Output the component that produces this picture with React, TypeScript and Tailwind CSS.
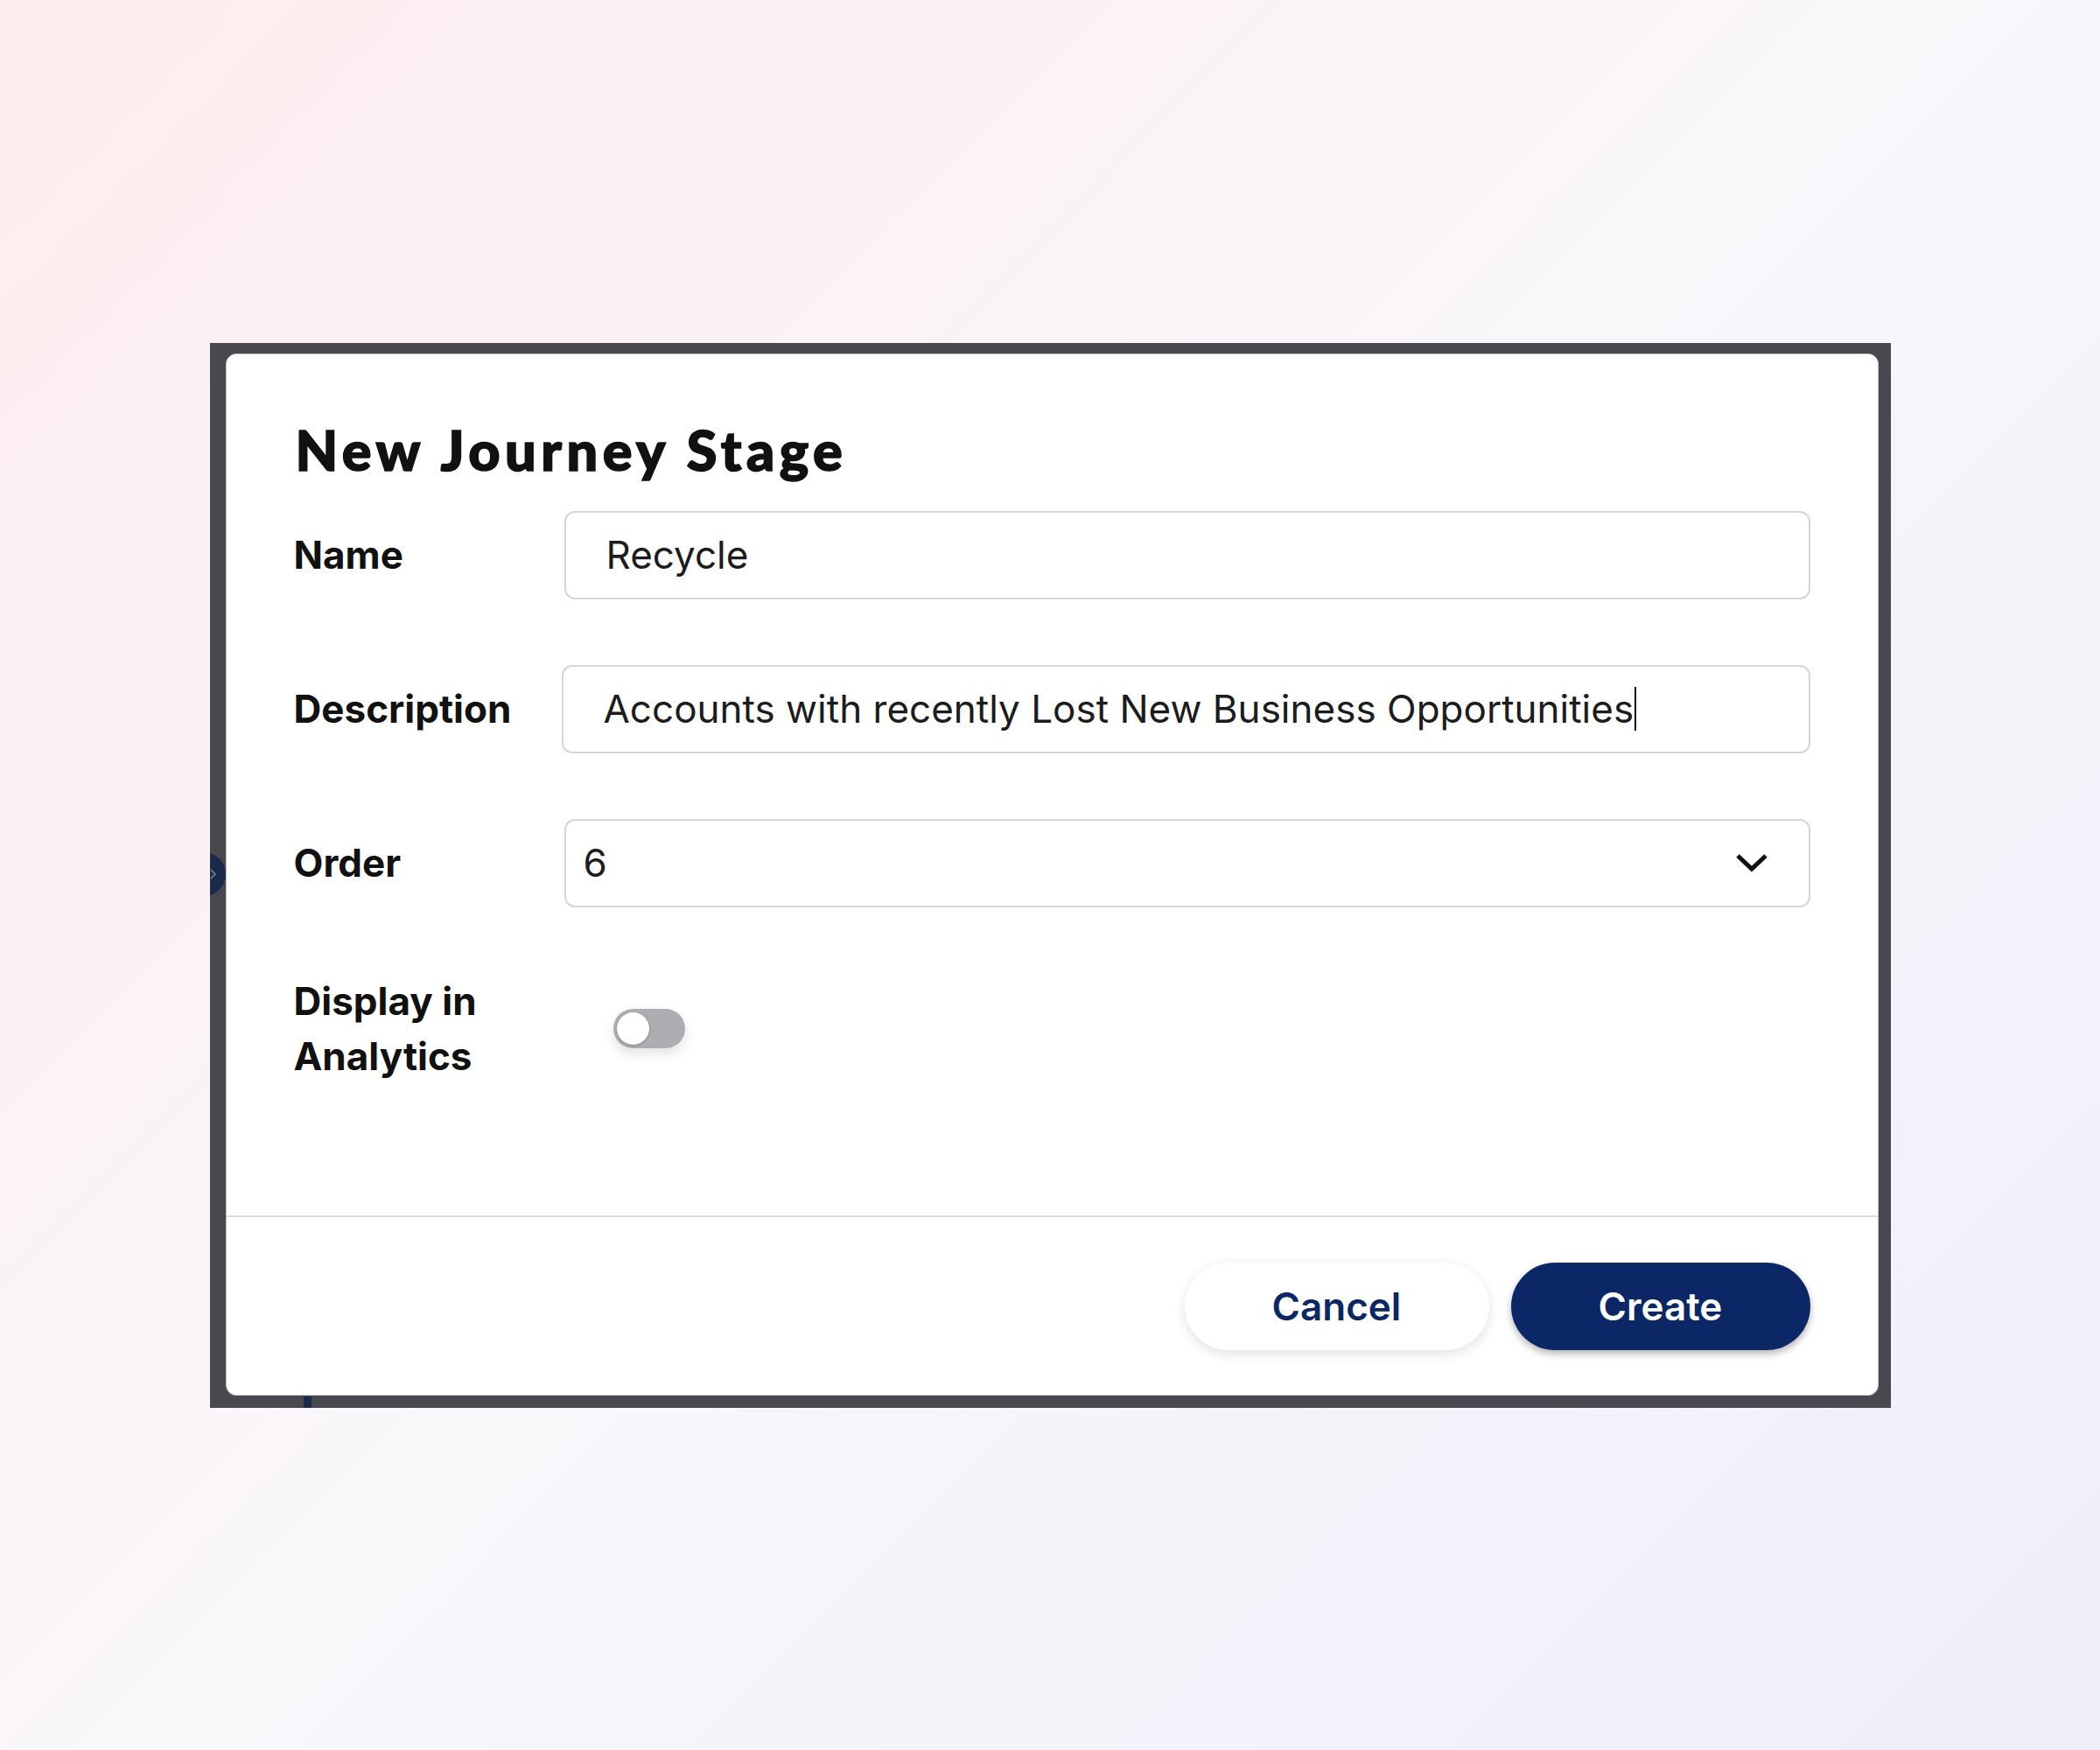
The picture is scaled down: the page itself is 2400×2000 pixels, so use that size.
import { useState } from 'react'

const labelCls = "text-[44px] font-bold text-[#111111] font-['Inter',sans-serif]"
const fieldCls =
  "h-[101px] rounded-[12px] border-2 border-[#d6d6d6] bg-white flex items-center text-[44px] text-[#1c1c1e] font-['Inter',sans-serif]"

function Field({ label, children }: { label: string; children: React.ReactNode }) {
  return (
    <div className="flex items-center">
      <div className={`w-[309px] shrink-0 leading-[61px] ${labelCls}`}>{label}</div>
      <div className="flex-1">{children}</div>
    </div>
  )
}

function Toggle({ on, onClick }: { on: boolean; onClick: () => void }) {
  return (
    <button
      onClick={onClick}
      className={`relative h-[45px] w-[82px] rounded-full shadow-[0_6px_14px_rgba(0,0,0,0.12)] ${
        on ? 'bg-[#0c2765]' : 'bg-[#aeaeb2]'
      }`}
    >
      <span
        className={`absolute top-[4px] h-[37px] w-[37px] rounded-full bg-white shadow-[0_1px_3px_rgba(0,0,0,0.25)] ${
          on ? 'left-[41px]' : 'left-[4px]'
        }`}
      />
    </button>
  )
}

export default function App() {
  const [analytics, setAnalytics] = useState(false)

  return (
    <div className="w-full h-[2000px] flex items-center justify-center bg-[linear-gradient(135deg,#fdeced_0%,#f9f7fa_50%,#efedf9_100%)]">
      {/* dark overlay frame */}
      <div className="relative w-[1921px] h-[1217px] bg-[#48494e] pt-[12px] pl-[18px] pr-[14px] pb-[14px] overflow-hidden">
        <div className="absolute left-[-32px] top-[582px] h-[50px] w-[50px] rounded-full bg-[#1b2a4a] flex items-center justify-end pr-[10px]">
          <svg width="8" height="12" viewBox="0 0 8 12">
            <polyline points="1,1 6,6 1,11" fill="none" stroke="#6b7080" strokeWidth="2" />
          </svg>
        </div>
        <div className="absolute left-[107px] bottom-0 h-[13px] w-[9px] bg-[#1b2a4a]" />

        <div className="relative h-full w-full rounded-[12px] border border-[#c4c4c6] bg-white flex flex-col">
          {/* body */}
          <div className="flex-1 pl-[77px] pr-[77px] pt-[71px]">
            <h1 className="ml-[2px] text-[63px] leading-[76px] font-black text-[#111111] font-['Lato',sans-serif] tracking-[5.5px] [-webkit-text-stroke:1.6px_#111111]">
              New Journey Stage
            </h1>

            <div className="mt-[32px] flex flex-col gap-[75px]">
              <Field label="Name">
                <div className={`${fieldCls} w-full pl-[46px]`}>Recycle</div>
              </Field>
              <Field label="Description">
                <div className={`${fieldCls} -ml-[3px] w-[calc(100%+3px)] pl-[46px]`}>
                  <span>Accounts with recently Lost New Business Opportunities</span>
                  <span className="ml-[1px] inline-block h-[50px] w-[2px] bg-black" />
                </div>
              </Field>
              <Field label="Order">
                <div className={`${fieldCls} w-full pl-[20px] pr-[46px] justify-between`}>
                  <span>6</span>
                  <svg width="38" height="22" viewBox="0 0 38 22">
                    <polyline points="3,3 19,18 35,3" fill="none" stroke="#111111" strokeWidth="5" />
                  </svg>
                </div>
              </Field>
              <div className="flex items-center mt-[1px]">
                <div className={`w-[309px] shrink-0 leading-[63px] ${labelCls}`}>
                  Display in
                  <br />
                  Analytics
                </div>
                <div className="ml-[56px] flex items-center">
                  <Toggle on={analytics} onClick={() => setAnalytics(!analytics)} />
                </div>
              </div>
            </div>
          </div>

          {/* footer */}
          <div className="h-[205px] shrink-0 border-t-2 border-[#dcdcdc] flex items-center justify-end gap-[25px] pr-[77px] pt-[2px]">
            <button className="h-[100px] w-[348px] rounded-full bg-white text-[44px] font-semibold text-[#0c2765] font-['Inter',sans-serif] shadow-[0_4px_14px_rgba(0,0,0,0.12)]">
              Cancel
            </button>
            <button className="h-[100px] w-[342px] rounded-full bg-[#0c2765] text-[44px] font-semibold text-white font-['Inter',sans-serif] shadow-[0_4px_8px_rgba(0,0,0,0.3)]">
              Create
            </button>
          </div>
        </div>
      </div>
    </div>
  )
}
